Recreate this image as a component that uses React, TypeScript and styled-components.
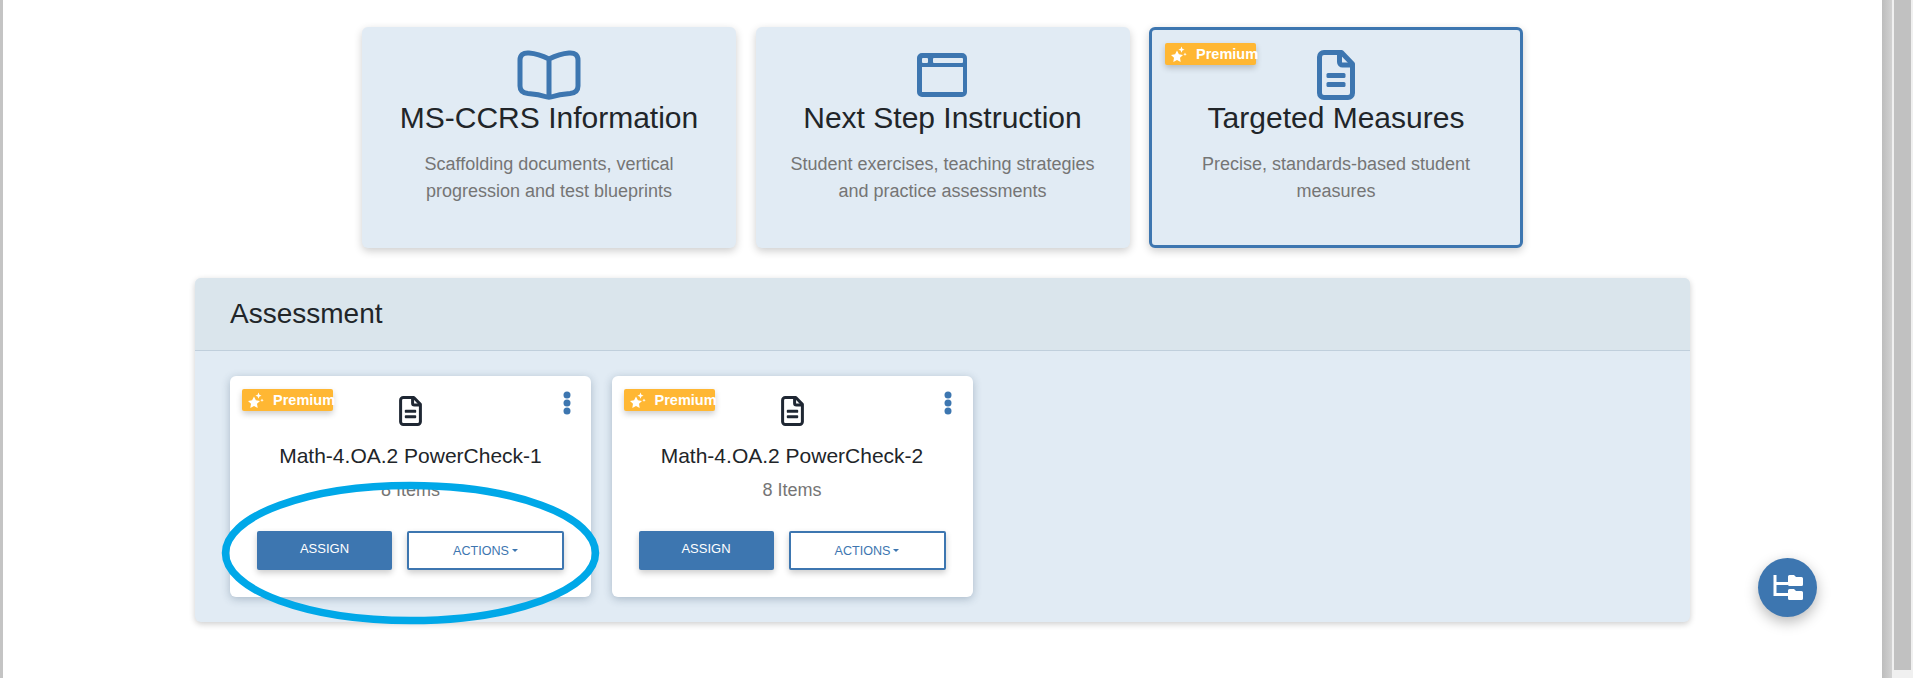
import React from "react";
import styled, { createGlobalStyle } from "styled-components";

const Global = createGlobalStyle`
  html, body { margin: 0; padding: 0; height: 678px; overflow: hidden; background: #fff; }
  body { font-family: "Liberation Sans", Arial, sans-serif; color: #212529; }
  * { box-sizing: border-box; }
`;

const Shell = styled.div`
  position: relative;
  display: flex;
  width: 1913px;
  height: 678px;
  overflow: hidden;
`;
const LeftEdge = styled.div`
  width: 3px;
  background: #c4c4c4;
`;
const Main = styled.main`
  flex: 1;
  display: flex;
  flex-direction: column;
  align-items: center;
  padding-top: 27px;
`;
const RightRail = styled.div`
  width: 31px;
  display: flex;
  background: #f0f0f0;
`;
const RailShade = styled.div`
  width: 10px;
  background: linear-gradient(90deg, #bdbdbd, #d2d2d2);
`;
const RailGap = styled.div`
  width: 2px;
  background: #f0f0f0;
`;
const RailThumb = styled.div`
  width: 17px;
  height: 670px;
  background: #c1c1c1;
`;

const FeatureRow = styled.div`
  display: grid;
  grid-template-columns: repeat(3, 374px);
  column-gap: 19.5px;
`;
const FeatureCard = styled.div<{ $active?: boolean }>`
  position: relative;
  height: 221px;
  padding: ${(p) => (p.$active ? "20px 12px 0" : "23px 15px 0")};
  display: flex;
  flex-direction: column;
  align-items: center;
  text-align: center;
  background: #e1ebf4;
  border-radius: 6px;
  border: ${(p) => (p.$active ? "3px solid #3d76b0" : "0")};
  box-shadow: 0 3px 8px rgba(0, 0, 0, 0.2);
`;
const FeatureIcon = styled.svg`
  display: block;
  height: 50px;
  width: 66px;
  color: #3d76b0;
`;
const FeatureTitle = styled.h2`
  margin: 1px 0 0;
  font-size: 30px;
  line-height: 34px;
  font-weight: 400;
  color: #212529;
`;
const FeatureText = styled.p`
  margin: 16px 0 0;
  width: 320px;
  font-size: 18px;
  line-height: 27px;
  color: #757575;
`;

const PremiumBadge = styled.div<{ $left: number }>`
  position: absolute;
  top: 13px;
  left: ${(p) => p.$left}px;
  width: 91px;
  height: 22px;
  display: flex;
  align-items: center;
  padding-left: 5px;
  gap: 9px;
  background: #ffb733;
  border-radius: 2px;
  box-shadow: 0 3px 6px rgba(0, 0, 0, 0.2);
  color: #fff;
  font-size: 14.5px;
  font-weight: 700;
  white-space: nowrap;
`;
const BadgeIcon = styled.svg`
  flex: none;
  width: 17px;
  height: 17px;
`;

const Section = styled.section`
  width: 1495px;
  margin-top: 30px;
  background: #e1ebf4;
  border-radius: 6px;
  box-shadow: 0 2px 6px rgba(0, 0, 0, 0.2);
`;
const SectionHeader = styled.header`
  height: 73px;
  padding-left: 35px;
  display: flex;
  align-items: center;
  background: #dae5ec;
  border-bottom: 1px solid #c0cfdc;
  border-radius: 6px 6px 0 0;
  font-size: 28px;
  color: #212529;
`;
const SectionBody = styled.div`
  display: flex;
  gap: 20.5px;
  padding: 25px 35px;
`;
const ItemCard = styled.article`
  position: relative;
  width: 361px;
  height: 221px;
  padding-top: 20px;
  display: flex;
  flex-direction: column;
  align-items: center;
  background: #fff;
  border-radius: 6px;
  box-shadow: 0 2px 8px rgba(40, 70, 100, 0.3);
`;
const ItemIcon = styled.svg`
  width: 23px;
  height: 30px;
  color: #1f2733;
`;
const ItemTitle = styled.h3`
  margin: 17px 0 0;
  font-size: 21px;
  line-height: 26px;
  font-weight: 400;
  color: #212529;
`;
const ItemCount = styled.div`
  margin-top: 10px;
  font-size: 18px;
  line-height: 22px;
  color: #757575;
`;
const MenuDots = styled.svg`
  position: absolute;
  top: 15px;
  right: 20.5px;
  width: 8px;
  height: 24px;
  color: #3d76b0;
`;
const ButtonRow = styled.div`
  display: flex;
  gap: 15px;
  margin-top: 30px;
`;
const AssignButton = styled.button`
  width: 135px;
  height: 39px;
  padding: 0 0 4px;
  border: 0;
  border-radius: 2px;
  background: #3d76b0;
  color: #fff;
  font: 400 13px "Liberation Sans", Arial, sans-serif;
  box-shadow: 0 3px 6px rgba(0, 0, 0, 0.2);
`;
const ActionsButton = styled.button`
  width: 157px;
  height: 39px;
  padding: 0;
  display: flex;
  align-items: center;
  justify-content: center;
  gap: 3px;
  border: 2px solid #3d76b0;
  border-radius: 2px;
  background: #fff;
  color: #3d76b0;
  font: 400 12.6px "Liberation Sans", Arial, sans-serif;
  box-shadow: 0 3px 6px rgba(0, 0, 0, 0.2);
`;
const Caret = styled.span`
  width: 0;
  height: 0;
  border-left: 3px solid transparent;
  border-right: 3px solid transparent;
  border-top: 3px solid currentColor;
`;

const Fab = styled.button`
  position: absolute;
  left: 1758px;
  top: 558px;
  width: 59px;
  height: 59px;
  padding: 0;
  display: flex;
  align-items: center;
  justify-content: center;
  border: 0;
  border-radius: 50%;
  background: #3d76b0;
  color: #fff;
  box-shadow: 0 5px 14px rgba(0, 0, 0, 0.28);
`;
const FabIcon = styled.svg`
  width: 30px;
  height: 28px;
`;
const Annotation = styled.svg`
  position: absolute;
  left: 215px;
  top: 475px;
  width: 392px;
  height: 156px;
  pointer-events: none;
`;

const StarIcon = () => (
  <BadgeIcon viewBox="0 0 17 17" fill="#fff" aria-hidden="true">
    <path d="M7 4.600l1.900 3.700 4.100.6-3 2.900.7 4.100L7 14l-3.700 1.900.7-4.100-3-2.900 4.100-.6z" strokeLinejoin="round" />
    <path d="M11.500.600l.9 2.200 2.200.9-2.200.9-.9 2.200-.9-2.200-2.200-.9 2.200-.9z" />
    <path d="M15 6.600l.5 1.200 1.200.5-1.200.5-.5 1.200-.5-1.200-1.200-.5 1.200-.5z" />
  </BadgeIcon>
);

const Premium = ({ left }: { left: number }) => (
  <PremiumBadge $left={left}>
    <StarIcon />
    <span>Premium</span>
  </PremiumBadge>
);

const FileGlyph = () => (
  <>
    <path
      d="M7 2.500h17.500L35.500 14v29a4.500 4.500 0 0 1-4.500 4.500H7A4.500 4.500 0 0 1 2.500 43V7A4.500 4.500 0 0 1 7 2.500z"
      fill="none"
      stroke="currentColor"
      strokeWidth="5"
      strokeLinejoin="round"
    />
    <path d="M22.500 2.500V12a3 3 0 0 0 3 3h10" fill="none" stroke="currentColor" strokeWidth="5" />
    <rect x="9.500" y="23" width="19" height="5" rx="1.500" fill="currentColor" />
    <rect x="9.500" y="32" width="19" height="5" rx="1.500" fill="currentColor" />
  </>
);

const BookIcon = () => (
  <FeatureIcon viewBox="0 0 66 50" aria-hidden="true">
    <path
      d="M33 9C27 6 20 3.500 13 3 7 2.500 4 5 4 10v26c0 5 3 7 8 7.500 7 .5 13 1.500 19 3.500 1.500.5 2.500.5 4 0 6-2 12-3 19-3.500 5-.5 8-2.500 8-7.500V10c0-5-3-7.500-9-7-7 .5-14 3-20 6zM33 9v38"
      fill="none"
      stroke="currentColor"
      strokeWidth="5"
      strokeLinejoin="round"
    />
  </FeatureIcon>
);

const WindowIcon = () => (
  <FeatureIcon viewBox="0 0 66 50" aria-hidden="true">
    <path
      fillRule="evenodd"
      fill="currentColor"
      d="M12 3h40a5 5 0 0 1 5 5v34a5 5 0 0 1-5 5H12a5 5 0 0 1-5-5V8a5 5 0 0 1 5-5zM13 8a1 1 0 0 0-1 1v3a1 1 0 0 0 1 1h4a1 1 0 0 0 1-1V9a1 1 0 0 0-1-1zM24 8a1 1 0 0 0-1 1v3a1 1 0 0 0 1 1h28a1 1 0 0 0 1-1V9a1 1 0 0 0-1-1zM12 17v25h41V17z"
    />
  </FeatureIcon>
);

const FileFeatureIcon = () => (
  <FeatureIcon viewBox="0 0 38 50" aria-hidden="true">
    <FileGlyph />
  </FeatureIcon>
);

const SmallFileIcon = () => (
  <ItemIcon viewBox="0 0 38 50" aria-hidden="true">
    <FileGlyph />
  </ItemIcon>
);

const Dots = () => (
  <MenuDots viewBox="0 0 8 24" fill="currentColor" aria-hidden="true">
    <circle cx="4" cy="4" r="3.500" />
    <circle cx="4" cy="12" r="3.500" />
    <circle cx="4" cy="20" r="3.500" />
  </MenuDots>
);

const TreeIcon = () => (
  <FabIcon viewBox="0 0 30 28" fill="currentColor" aria-hidden="true">
    <path d="M.5 1h3v7H15v3H3.500v8H15v3H.5z" />
    <path d="M15 2.500A1.500 1.500 0 0 1 16.500 1H21l2 2h5.500A1.500 1.500 0 0 1 30 4.500v6a1.500 1.500 0 0 1-1.500 1.500h-12a1.500 1.500 0 0 1-1.500-1.500z" />
    <path d="M15 16.500a1.500 1.500 0 0 1 1.500-1.500H21l2 2h5.500a1.500 1.500 0 0 1 1.500 1.500v6a1.500 1.500 0 0 1-1.500 1.500h-12a1.500 1.500 0 0 1-1.500-1.500z" />
  </FabIcon>
);

const features = [
  { title: "MS-CCRS Information", text: "Scaffolding documents, vertical progression and test blueprints", icon: <BookIcon /> },
  { title: "Next Step Instruction", text: "Student exercises, teaching strategies and practice assessments", icon: <WindowIcon /> },
  { title: "Targeted Measures", text: "Precise, standards-based student measures", icon: <FileFeatureIcon />, active: true },
];

const items = [
  { title: "Math-4.OA.2 PowerCheck-1", count: "8 Items" },
  { title: "Math-4.OA.2 PowerCheck-2", count: "8 Items" },
];

export default function App() {
  return (
    <Shell>
      <Global />
      <LeftEdge />
      <Main>
        <FeatureRow>
          {features.map((f) => (
            <FeatureCard key={f.title} $active={f.active}>
              {f.active && <Premium left={13} />}
              {f.icon}
              <FeatureTitle>{f.title}</FeatureTitle>
              <FeatureText>{f.text}</FeatureText>
            </FeatureCard>
          ))}
        </FeatureRow>
        <Section>
          <SectionHeader>Assessment</SectionHeader>
          <SectionBody>
            {items.map((it) => (
              <ItemCard key={it.title}>
                <Premium left={12} />
                <Dots />
                <SmallFileIcon />
                <ItemTitle>{it.title}</ItemTitle>
                <ItemCount>{it.count}</ItemCount>
                <ButtonRow>
                  <AssignButton>ASSIGN</AssignButton>
                  <ActionsButton>
                    ACTIONS
                    <Caret />
                  </ActionsButton>
                </ButtonRow>
              </ItemCard>
            ))}
          </SectionBody>
        </Section>
      </Main>
      <RightRail>
        <RailShade />
        <RailGap />
        <RailThumb />
      </RightRail>
      <Fab aria-label="Standards tree">
        <TreeIcon />
      </Fab>
      <Annotation viewBox="0 0 392 156" aria-hidden="true">
        <ellipse cx="195.500" cy="78" rx="185" ry="67.500" fill="none" stroke="#00a8e8" strokeWidth="7.500" />
      </Annotation>
    </Shell>
  );
}
